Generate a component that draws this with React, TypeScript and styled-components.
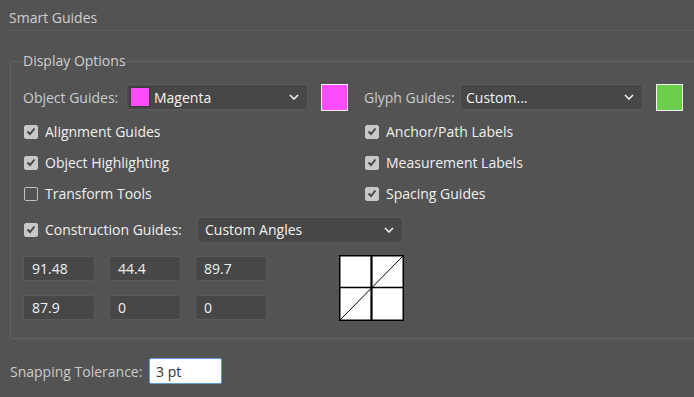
import React from 'react';
import styled, {createGlobalStyle} from 'styled-components';

const GlobalStyle = createGlobalStyle`
  html, body {
    margin: 0;
    background: #535353;
  }
  body {
    font-family: "Open Sans", "Noto Sans", sans-serif;
    font-size: 14px;
    color: #f0f0f0;
  }
`

const Page = styled.div`
  width: 694px;
  height: 397px;
  overflow: hidden;
`

const Header = styled.div`
  margin-left: 8px;
  padding: 8px 0 2px 1px;
  line-height: 20px;
  color: #cfcfcf;
  border-bottom: 1px solid #5e5e5e;
`

const Group = styled.fieldset`
  margin: 20px -20px 0 10px;
  padding: 13px 12px 17px;
  border: 1px solid #626262;
  border-radius: 3px;
`

const Legend = styled.legend`
  padding: 0;
  line-height: 20px;
  color: #cfcfcf;
`

const TwoCols = styled.div`
  display: grid;
  grid-template-columns: 341px 1fr;
`

const Col = styled.div`
  display: flex;
  flex-direction: column;
`

const SelectRow = styled.div`
  display: flex;
  align-items: center;
  height: 26px;
  margin-bottom: 6px;
`

const Label = styled.span<{ $w: number }>`
  width: ${p => p.$w}px;
  flex: none;
  color: #cbcbcb;
  white-space: nowrap;
`

const Select = styled.div<{ $w: number }>`
  width: ${p => p.$w}px;
  height: 26px;
  box-sizing: border-box;
  flex: none;
  display: flex;
  align-items: center;
  gap: 4px;
  padding: 0 8px 0 3px;
  background: #474747;
  border: 1px solid #5b5b5b;
  border-radius: 3px;
  color: #f4f4f4;
`

const SelectText = styled.span<{ $pad?: number }>`
  flex: 1;
  padding-left: ${p => p.$pad ?? 4}px;
  white-space: nowrap;
`

const MiniSwatch = styled.span<{ $c: string }>`
  width: 20px;
  height: 20px;
  background: ${p => p.$c};
  border: 1px solid #3a3a3a;
  box-sizing: border-box;
`

const Swatch = styled.div<{ $c: string }>`
  width: 27px;
  height: 27px;
  box-sizing: border-box;
  margin-left: 13px;
  background: ${p => p.$c};
  border: 1.5px solid #f2f2f2;
`

const CheckRow = styled.label`
  display: flex;
  align-items: center;
  gap: 7px;
  height: 31px;
  padding-left: 1px;
  white-space: nowrap;
`

const Box = styled.span<{ $on: boolean }>`
  width: 14px;
  height: 14px;
  box-sizing: border-box;
  border-radius: 2px;
  display: flex;
  align-items: center;
  justify-content: center;
  background: ${p => (p.$on ? '#c8c8c8' : 'transparent')};
  border: 1px solid ${p => (p.$on ? '#c8c8c8' : '#bfbfbf')};
`

const ConstructionRow = styled.div`
  display: flex;
  align-items: center;
  height: 25px;
  margin-top: 8px;
`

const ConstructionCheck = styled(CheckRow)`
  width: 173px;
  height: 25px;
`

const AngleArea = styled.div`
  display: flex;
  align-items: center;
  gap: 72px;
  margin-top: 13px;
`

const AngleGrid = styled.div`
  display: grid;
  grid-template-columns: repeat(3, 72px);
  gap: 14px;
`

const Field = styled.div`
  height: 25px;
  box-sizing: border-box;
  padding-left: 8px;
  display: flex;
  align-items: center;
  background: #474747;
  border: 1px solid #5a5a5a;
  border-radius: 2px;
  color: #f2f2f2;
`

const Snap = styled.div`
  display: flex;
  align-items: center;
  margin: 19px 0 0 10px;
`

const SnapInput = styled.div`
  width: 73px;
  height: 26px;
  box-sizing: border-box;
  padding-left: 6px;
  display: flex;
  align-items: center;
  background: #ffffff;
  border: 1.5px solid #5d9de0;
  border-radius: 2px;
  color: #333333;
`

const Chevron = () => (
  <svg width="10" height="6" viewBox="0 0 10 6">
    <path d="M1 1 L5 5 L9 1" fill="none" stroke="#f0f0f0" strokeWidth="1.6"/>
  </svg>
)

const Check = ({on}: { on: boolean }) => (
  <Box $on={on}>
    {on && (
      <svg width="10" height="9" viewBox="0 0 10 9">
        <path d="M1.5 4.5 L4 7 L8.5 1.5" fill="none" stroke="#444" strokeWidth="1.9"/>
      </svg>
    )}
  </Box>
)

const AnglePreview = () => (
  <svg width="65" height="66" viewBox="0 0 65 66">
    <rect x="0.75" y="0.75" width="63.5" height="64.5" fill="#fff" stroke="#000" strokeWidth="1.5"/>
    <line x1="32.5" y1="0" x2="32.5" y2="66" stroke="#000" strokeWidth="2.2"/>
    <line x1="0" y1="32.5" x2="65" y2="32.5" stroke="#000" strokeWidth="1.6"/>
    <line x1="1" y1="65" x2="64" y2="1" stroke="#000" strokeWidth="1"/>
  </svg>
)

const left = [
  {t: 'Alignment Guides', on: true},
  {t: 'Object Highlighting', on: true},
  {t: 'Transform Tools', on: false},
]

const right = [
  {t: 'Anchor/Path Labels', on: true},
  {t: 'Measurement Labels', on: true},
  {t: 'Spacing Guides', on: true},
]

const angles = ['91.48', '44.4', '89.7', '87.9', '0', '0']

const App = () => {
  return (
    <Page>
      <GlobalStyle/>
      <Header>Smart Guides</Header>
      <Group>
        <Legend>Display Options</Legend>
        <TwoCols>
          <Col>
            <SelectRow>
              <Label $w={103}>Object Guides:</Label>
              <Select $w={182}>
                <MiniSwatch $c="#ff4cff"/>
                <SelectText $pad={0}>Magenta</SelectText>
                <Chevron/>
              </Select>
              <Swatch $c="#ff4cff"/>
            </SelectRow>
            {left.map(item => (
              <CheckRow key={item.t}>
                <Check on={item.on}/>
                {item.t}
              </CheckRow>
            ))}
          </Col>
          <Col>
            <SelectRow>
              <Label $w={96}>Glyph Guides:</Label>
              <Select $w={183}>
                <SelectText $pad={2}>Custom...</SelectText>
                <Chevron/>
              </Select>
              <Swatch $c="#6ccf4c"/>
            </SelectRow>
            {right.map(item => (
              <CheckRow key={item.t}>
                <Check on={item.on}/>
                {item.t}
              </CheckRow>
            ))}
          </Col>
        </TwoCols>
        <ConstructionRow>
          <ConstructionCheck>
            <Check on={true}/>
            Construction Guides:
          </ConstructionCheck>
          <Select $w={206}>
            <SelectText>Custom Angles</SelectText>
            <Chevron/>
          </Select>
        </ConstructionRow>
        <AngleArea>
          <AngleGrid>
            {angles.map((a, i) => (
              <Field key={i}>{a}</Field>
            ))}
          </AngleGrid>
          <AnglePreview/>
        </AngleArea>
      </Group>
      <Snap>
        <Label $w={139}>Snapping Tolerance:</Label>
        <SnapInput>3 pt</SnapInput>
      </Snap>
    </Page>
  );
}

export default App;
